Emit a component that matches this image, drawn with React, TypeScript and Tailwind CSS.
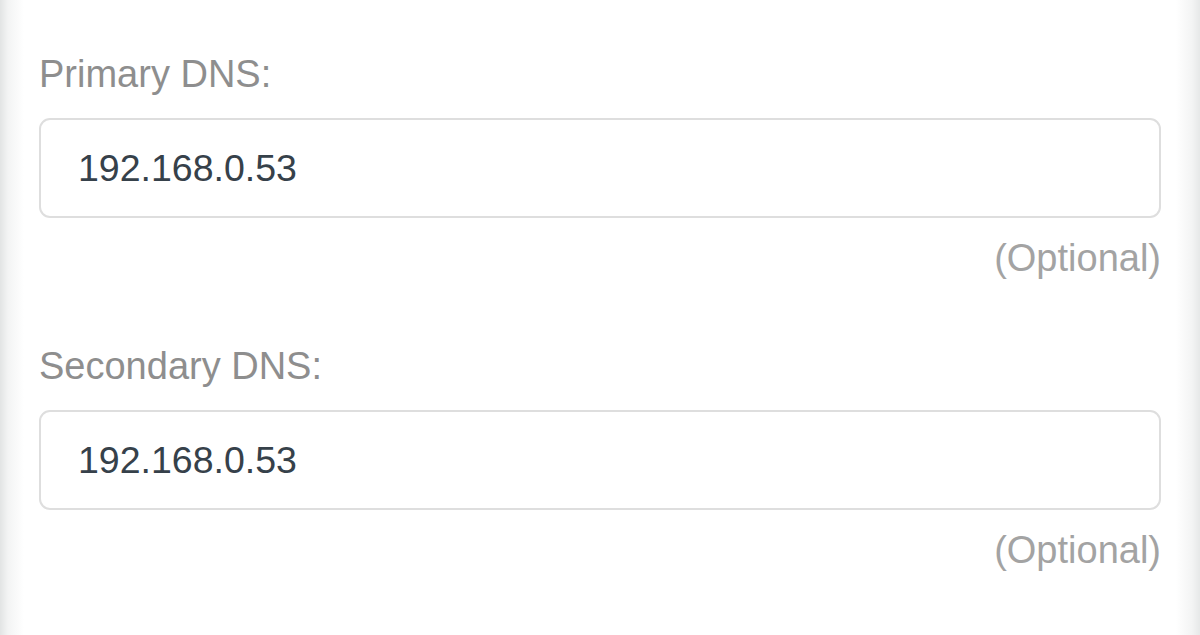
const font = { fontFamily: '"Liberation Sans", Arial, sans-serif' };

function DnsField({ label, value }: { label: string; value: string }) {
    return (
        <div className="flex flex-col">
            <label className="text-[38px] leading-[44px] text-[#8e8e8e]">{label}</label>
            <div className="mt-[22px] h-[100px] rounded-[11px] border-2 border-[#dedede] bg-white flex items-center pl-[37px]">
                <span className="text-[37.5px] leading-[44px] text-[#36414a]">{value}</span>
            </div>
            <span className="mt-[18px] self-end text-[38px] leading-[44px] text-[#a3a3a3]">(Optional)</span>
        </div>
    );
}

export default function App() {
    return (
        <div
            style={font}
            className="w-[1200px] h-[635px] overflow-hidden bg-[linear-gradient(to_right,#e2e4e4,#f3f4f4_8px,#ffffff_24px,#ffffff_calc(100%-24px),#f3f4f4_calc(100%-8px),#e6e8e8)]">
            <div className="flex flex-col gap-[64px] px-[39px] pt-[52px]">
                <DnsField label="Primary DNS:" value="192.168.0.53" />
                <DnsField label="Secondary DNS:" value="192.168.0.53" />
            </div>
        </div>
    );
}
